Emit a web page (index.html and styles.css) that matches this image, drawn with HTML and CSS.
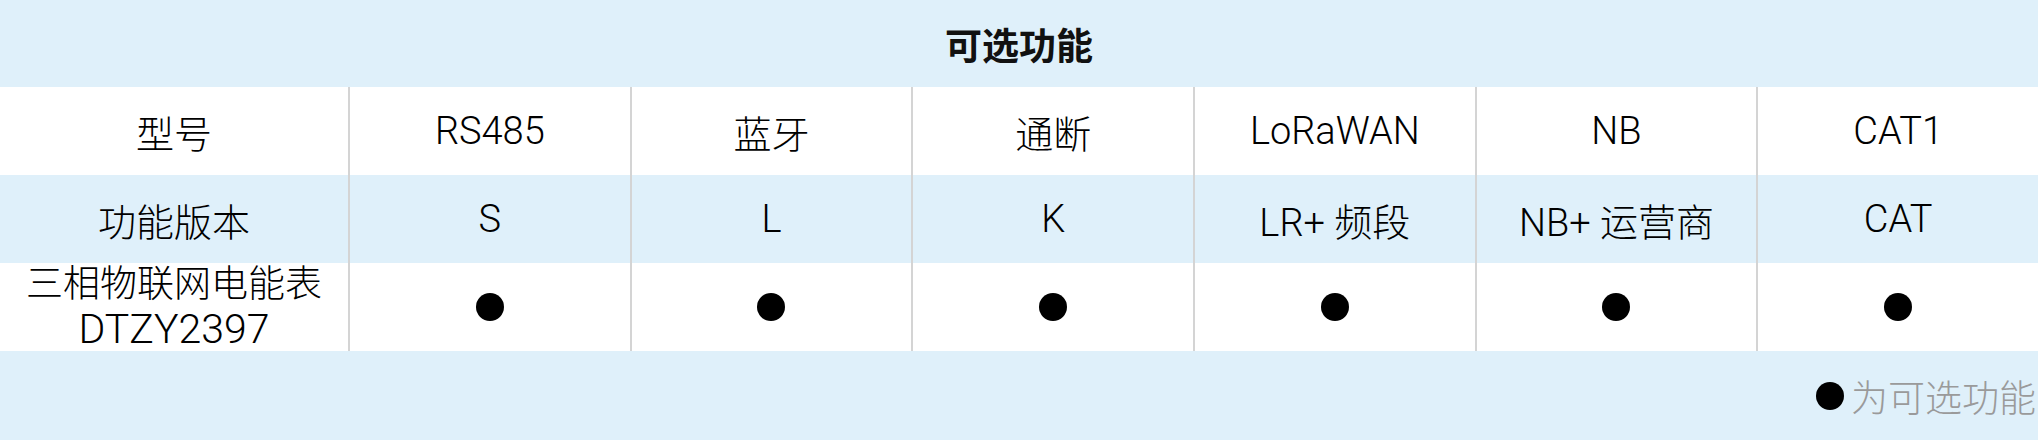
FILE: index.html
```html
<!DOCTYPE html>
<html lang="zh-CN">
<head>
<meta charset="utf-8">
<title>可选功能</title>
<link rel="stylesheet" href="styles.css">
</head>
<body>
<div class="sheet">
  <div class="title">可选功能</div>
  <div class="row">
    <div class="cell">型号</div>
    <div class="cell">RS485</div>
    <div class="cell">蓝牙</div>
    <div class="cell">通断</div>
    <div class="cell">LoRaWAN</div>
    <div class="cell">NB</div>
    <div class="cell">CAT1</div>
  </div>
  <div class="row alt">
    <div class="cell">功能版本</div>
    <div class="cell">S</div>
    <div class="cell">L</div>
    <div class="cell">K</div>
    <div class="cell">LR+ 频段</div>
    <div class="cell">NB+ 运营商</div>
    <div class="cell">CAT</div>
  </div>
  <div class="row">
    <div class="cell name"><span class="line">三相物联网电能表</span><span class="line code">DTZY2397</span></div>
    <div class="cell"><span class="dot"></span></div>
    <div class="cell"><span class="dot"></span></div>
    <div class="cell"><span class="dot"></span></div>
    <div class="cell"><span class="dot"></span></div>
    <div class="cell"><span class="dot"></span></div>
    <div class="cell"><span class="dot"></span></div>
  </div>
  <div class="legend"><span class="dot"></span><span class="legend-text">为可选功能</span></div>
</div>
</body>
</html>
```

FILE: styles.css
```css
html, body {
  margin: 0;
  padding: 0;
  background: #ffffff;
}

body {
  font-family: "Roboto", "Noto Sans CJK SC", "Noto Sans", sans-serif;
  color: #000000;
}

.sheet {
  width: 2038px;
  display: flex;
  flex-direction: column;
}

.title {
  height: 87px;
  background: #dff0fa;
  display: flex;
  align-items: center;
  justify-content: center;
  font-family: "Noto Sans CJK SC", sans-serif;
  font-size: 37px;
  font-weight: 700;
  color: #111111;
}

.row {
  display: grid;
  grid-template-columns: 348px repeat(6, 1fr);
  height: 88px;
  background: #ffffff;
}

.row.alt {
  background: #dff0fa;
}

.cell {
  display: flex;
  align-items: center;
  justify-content: center;
  text-align: center;
  font-size: 38px;
  font-weight: 300;
  white-space: nowrap;
}

.cell.name {
  flex-direction: column;
  font-size: 37px;
}

.line {
  display: block;
  height: 44px;
  line-height: 44px;
}

.line.code {
  font-size: 41px;
}

.cell + .cell {
  border-left: 2px solid #d4d4d4;
}

.dot {
  display: inline-block;
  width: 28px;
  height: 28px;
  border-radius: 50%;
  background: #000000;
}

.legend {
  height: 89px;
  background: #dff0fa;
  display: flex;
  align-items: center;
  justify-content: flex-end;
  gap: 7px;
  padding-right: 2px;
}

.legend-text {
  font-family: "Noto Sans CJK SC", sans-serif;
  font-size: 37px;
  font-weight: 300;
  color: #9a9a9a;
}
```
